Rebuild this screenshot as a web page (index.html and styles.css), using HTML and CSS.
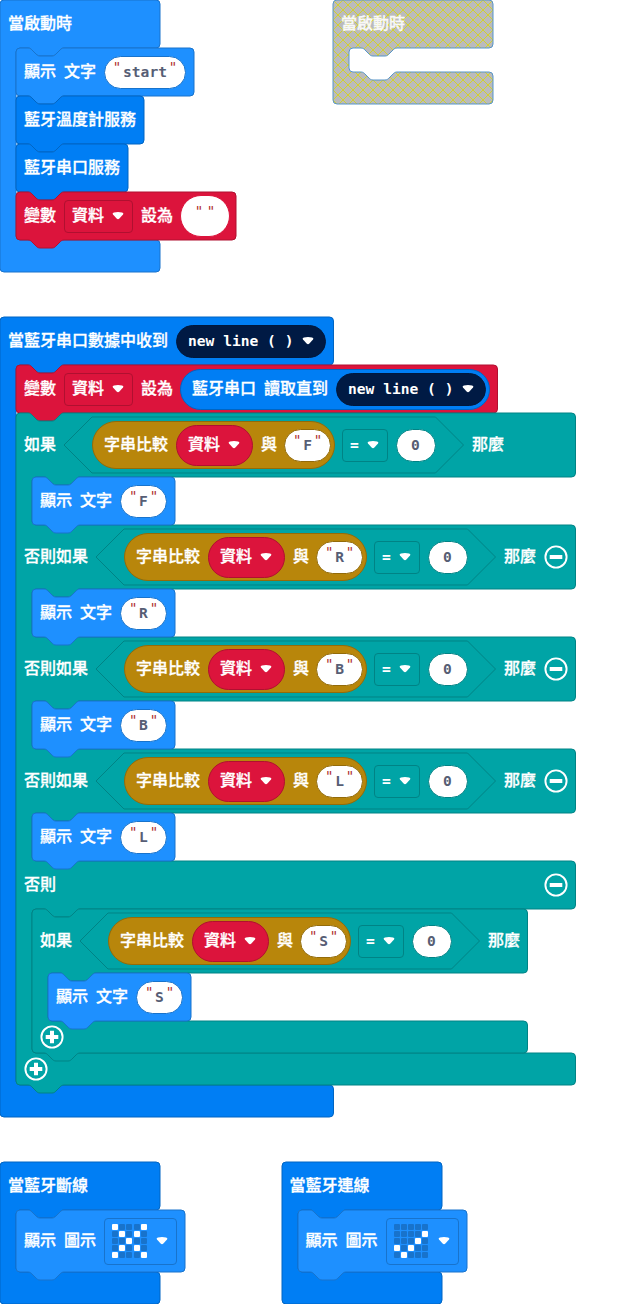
FILE: index.html
```html
<!DOCTYPE html>
<html lang="zh-Hant">
<head>
<meta charset="utf-8">
<title>micro:bit</title>
<link rel="stylesheet" href="styles.css">
</head>
<body>
<svg class="defs" width="0" height="0">
  <defs>
    <pattern id="hatch" patternUnits="userSpaceOnUse" width="10" height="10">
      <rect width="10" height="10" fill="#bbb"/>
      <path d="M0 0l10 10M10 0l-10 10" stroke="#d2d22d" stroke-width="1"/>
    </pattern>
    <symbol id="arrow" viewBox="0 0 12 8"><path d="M2 .5Q6-.3 10 .5Q12 1 11 2.500L7.400 6.500Q6 7.900 4.600 6.500L1 2.500Q0 1 2 .5Z" fill="#fff"/></symbol>
    <symbol id="minus" viewBox="0 0 24 24"><circle cx="12" cy="12" r="10.600" fill="none" stroke="#fff" stroke-width="1.900"/><path d="M5.700 12h12.600" stroke="#fff" stroke-width="4"/></symbol>
    <symbol id="plus" viewBox="0 0 24 24"><circle cx="12" cy="12" r="10.600" fill="none" stroke="#fff" stroke-width="1.900"/><path d="M5.700 12h12.600M12 5.700v12.600" stroke="#fff" stroke-width="4"/></symbol>
    <path id="hex" d="M28 0H371.500L399.500 28L371.500 56H28L0 28Z"/>
    <path id="show" d="M0 4a4 4 0 0 1 4-4H12c2 0 3 1 4 2l4 4c1 1 2 2 4 2h12c2 0 3-1 4-2l4-4c1-1 2-2 4-2H139a4 4 0 0 1 4 4V44a4 4 0 0 1-4 4H48c-2 0-3 1-4 2l-4 4c-1 1-2 2-4 2h-12c-2 0-3-1-4-2l-4-4c-1-1-2-2-4-2H4a4 4 0 0 1-4-4Z"/>
    <path id="event" d="M0 4a4 4 0 0 1 4-4H156a4 4 0 0 1 4 4V44a4 4 0 0 1-4 4H64c-2 0-3 1-4 2l-4 4c-1 1-2 2-4 2h-12c-2 0-3-1-4-2l-4-4c-1-1-2-2-4-2H20a4 4 0 0 0-4 4V106a4 4 0 0 0 4 4H156a4 4 0 0 1 4 4V138a4 4 0 0 1-4 4H4a4 4 0 0 1-4-4Z"/>
    <path id="icon-block" d="M0 4a4 4 0 0 1 4-4H12c2 0 3 1 4 2l4 4c1 1 2 2 4 2h12c2 0 3-1 4-2l4-4c1-1 2-2 4-2H165a4 4 0 0 1 4 4V58a4 4 0 0 1-4 4H48c-2 0-3 1-4 2l-4 4c-1 1-2 2-4 2h-12c-2 0-3-1-4-2l-4-4c-1-1-2-2-4-2H4a4 4 0 0 1-4-4Z"/>
  </defs>
</svg>
<main class="workspace">

  <section class="stack on-start">
    <svg class="shape basic"><path d="M0 4a4 4 0 0 1 4-4H156a4 4 0 0 1 4 4V44a4 4 0 0 1-4 4H64c-2 0-3 1-4 2l-4 4c-1 1-2 2-4 2h-12c-2 0-3-1-4-2l-4-4c-1-1-2-2-4-2H20a4 4 0 0 0-4 4V236a4 4 0 0 0 4 4H156a4 4 0 0 1 4 4V268a4 4 0 0 1-4 4H4a4 4 0 0 1-4-4Z"/></svg>
    <div class="row"><span class="label">當啟動時</span></div>
    <div class="body">
      <div class="block">
        <svg class="shape basic"><path d="M0 4a4 4 0 0 1 4-4H12c2 0 3 1 4 2l4 4c1 1 2 2 4 2h12c2 0 3-1 4-2l4-4c1-1 2-2 4-2H174a4 4 0 0 1 4 4V44a4 4 0 0 1-4 4H48c-2 0-3 1-4 2l-4 4c-1 1-2 2-4 2h-12c-2 0-3-1-4-2l-4-4c-1-1-2-2-4-2H4a4 4 0 0 1-4-4Z"/></svg>
        <div class="row"><span class="label">顯示 文字</span><span class="text word"><i>"</i><b>start</b><i>"</i></span></div>
      </div>
      <div class="block">
        <svg class="shape ble"><path d="M0 4a4 4 0 0 1 4-4H12c2 0 3 1 4 2l4 4c1 1 2 2 4 2h12c2 0 3-1 4-2l4-4c1-1 2-2 4-2H124a4 4 0 0 1 4 4V44a4 4 0 0 1-4 4H48c-2 0-3 1-4 2l-4 4c-1 1-2 2-4 2h-12c-2 0-3-1-4-2l-4-4c-1-1-2-2-4-2H4a4 4 0 0 1-4-4Z"/></svg>
        <div class="row"><span class="label">藍牙溫度計服務</span></div>
      </div>
      <div class="block">
        <svg class="shape ble"><path d="M0 4a4 4 0 0 1 4-4H12c2 0 3 1 4 2l4 4c1 1 2 2 4 2h12c2 0 3-1 4-2l4-4c1-1 2-2 4-2H108a4 4 0 0 1 4 4V44a4 4 0 0 1-4 4H48c-2 0-3 1-4 2l-4 4c-1 1-2 2-4 2h-12c-2 0-3-1-4-2l-4-4c-1-1-2-2-4-2H4a4 4 0 0 1-4-4Z"/></svg>
        <div class="row"><span class="label">藍牙串口服務</span></div>
      </div>
      <div class="block">
        <svg class="shape vars"><path d="M0 4a4 4 0 0 1 4-4H12c2 0 3 1 4 2l4 4c1 1 2 2 4 2h12c2 0 3-1 4-2l4-4c1-1 2-2 4-2H216a4 4 0 0 1 4 4V44a4 4 0 0 1-4 4H48c-2 0-3 1-4 2l-4 4c-1 1-2 2-4 2h-12c-2 0-3-1-4-2l-4-4c-1-1-2-2-4-2H4a4 4 0 0 1-4-4Z"/></svg>
        <div class="row"><span class="label">變數</span><span class="drop var"><span class="label">資料</span><svg class="arrow"><use href="#arrow"/></svg></span><span class="label">設為</span><span class="text empty"><i>"</i><i>"</i></span></div>
      </div>
    </div>
    <div class="foot"></div>
  </section>

  <section class="stack disabled">
    <svg class="shape off"><path d="M0 4a4 4 0 0 1 4-4H156a4 4 0 0 1 4 4V44a4 4 0 0 1-4 4H64c-2 0-3 1-4 2l-4 4c-1 1-2 2-4 2h-12c-2 0-3-1-4-2l-4-4c-1-1-2-2-4-2H20a4 4 0 0 0-4 4V68a4 4 0 0 0 4 4H28c2 0 3 1 4 2l4 4c1 1 2 2 4 2h12c2 0 3-1 4-2l4-4c1-1 2-2 4-2H156a4 4 0 0 1 4 4V100a4 4 0 0 1-4 4H4a4 4 0 0 1-4-4Z"/></svg>
    <div class="row"><span class="label">當啟動時</span></div>
    <div class="gap"></div>
    <div class="foot"></div>
  </section>

  <section class="stack on-data">
    <svg class="shape ble"><path d="M0 4a4 4 0 0 1 4-4H329.500a4 4 0 0 1 4 4V44a4 4 0 0 1-4 4H64c-2 0-3 1-4 2l-4 4c-1 1-2 2-4 2h-12c-2 0-3-1-4-2l-4-4c-1-1-2-2-4-2H20a4 4 0 0 0-4 4V764a4 4 0 0 0 4 4H329.500a4 4 0 0 1 4 4V796a4 4 0 0 1-4 4H4a4 4 0 0 1-4-4Z"/></svg>
    <div class="row"><span class="label">當藍牙串口數據中收到</span><span class="delim"><b>new line ( )</b><svg class="arrow"><use href="#arrow"/></svg></span></div>
    <div class="body">
      <div class="block">
        <svg class="shape vars"><path d="M0 4a4 4 0 0 1 4-4H12c2 0 3 1 4 2l4 4c1 1 2 2 4 2h12c2 0 3-1 4-2l4-4c1-1 2-2 4-2H477.500a4 4 0 0 1 4 4V44a4 4 0 0 1-4 4H48c-2 0-3 1-4 2l-4 4c-1 1-2 2-4 2h-12c-2 0-3-1-4-2l-4-4c-1-1-2-2-4-2H4a4 4 0 0 1-4-4Z"/></svg>
        <div class="row"><span class="label">變數</span><span class="drop var"><span class="label">資料</span><svg class="arrow"><use href="#arrow"/></svg></span><span class="label">設為</span><span class="read"><span class="label">藍牙串口 讀取直到</span><span class="delim"><b>new line ( )</b><svg class="arrow"><use href="#arrow"/></svg></span></span></div>
      </div>

      <div class="block">
        <svg class="shape logic"><path d="M0 4a4 4 0 0 1 4-4H12c2 0 3 1 4 2l4 4c1 1 2 2 4 2h12c2 0 3-1 4-2l4-4c1-1 2-2 4-2H555.500a4 4 0 0 1 4 4V60a4 4 0 0 1-4 4H64c-2 0-3 1-4 2l-4 4c-1 1-2 2-4 2h-12c-2 0-3-1-4-2l-4-4c-1-1-2-2-4-2H20a4 4 0 0 0-4 4V108a4 4 0 0 0 4 4H555.500a4 4 0 0 1 4 4V172a4 4 0 0 1-4 4H64c-2 0-3 1-4 2l-4 4c-1 1-2 2-4 2h-12c-2 0-3-1-4-2l-4-4c-1-1-2-2-4-2H20a4 4 0 0 0-4 4V220a4 4 0 0 0 4 4H555.500a4 4 0 0 1 4 4V284a4 4 0 0 1-4 4H64c-2 0-3 1-4 2l-4 4c-1 1-2 2-4 2h-12c-2 0-3-1-4-2l-4-4c-1-1-2-2-4-2H20a4 4 0 0 0-4 4V332a4 4 0 0 0 4 4H555.500a4 4 0 0 1 4 4V396a4 4 0 0 1-4 4H64c-2 0-3 1-4 2l-4 4c-1 1-2 2-4 2h-12c-2 0-3-1-4-2l-4-4c-1-1-2-2-4-2H20a4 4 0 0 0-4 4V444a4 4 0 0 0 4 4H555.500a4 4 0 0 1 4 4V492a4 4 0 0 1-4 4H64c-2 0-3 1-4 2l-4 4c-1 1-2 2-4 2h-12c-2 0-3-1-4-2l-4-4c-1-1-2-2-4-2H20a4 4 0 0 0-4 4V636a4 4 0 0 0 4 4H555.500a4 4 0 0 1 4 4V668a4 4 0 0 1-4 4H48c-2 0-3 1-4 2l-4 4c-1 1-2 2-4 2h-12c-2 0-3-1-4-2l-4-4c-1-1-2-2-4-2H4a4 4 0 0 1-4-4Z"/></svg>
        <div class="row tall"><span class="label">如果</span>
          <span class="cond"><svg class="shape logic"><use href="#hex"/></svg><span class="compare"><span class="label">字串比較</span><span class="pill-var"><span class="label">資料</span><svg class="arrow"><use href="#arrow"/></svg></span><span class="label">與</span><span class="text"><i>"</i><b>F</b><i>"</i></span></span><span class="drop op"><b>=</b><svg class="arrow"><use href="#arrow"/></svg></span><span class="num">0</span></span>
          <span class="label">那麼</span></div>
        <div class="body"><div class="block"><svg class="shape basic"><use href="#show"/></svg><div class="row"><span class="label">顯示 文字</span><span class="text"><i>"</i><b>F</b><i>"</i></span></div></div></div>

        <div class="row tall"><span class="label">否則如果</span>
          <span class="cond"><svg class="shape logic"><use href="#hex"/></svg><span class="compare"><span class="label">字串比較</span><span class="pill-var"><span class="label">資料</span><svg class="arrow"><use href="#arrow"/></svg></span><span class="label">與</span><span class="text"><i>"</i><b>R</b><i>"</i></span></span><span class="drop op"><b>=</b><svg class="arrow"><use href="#arrow"/></svg></span><span class="num">0</span></span>
          <span class="label">那麼</span><svg class="btn"><use href="#minus"/></svg></div>
        <div class="body"><div class="block"><svg class="shape basic"><use href="#show"/></svg><div class="row"><span class="label">顯示 文字</span><span class="text"><i>"</i><b>R</b><i>"</i></span></div></div></div>

        <div class="row tall"><span class="label">否則如果</span>
          <span class="cond"><svg class="shape logic"><use href="#hex"/></svg><span class="compare"><span class="label">字串比較</span><span class="pill-var"><span class="label">資料</span><svg class="arrow"><use href="#arrow"/></svg></span><span class="label">與</span><span class="text"><i>"</i><b>B</b><i>"</i></span></span><span class="drop op"><b>=</b><svg class="arrow"><use href="#arrow"/></svg></span><span class="num">0</span></span>
          <span class="label">那麼</span><svg class="btn"><use href="#minus"/></svg></div>
        <div class="body"><div class="block"><svg class="shape basic"><use href="#show"/></svg><div class="row"><span class="label">顯示 文字</span><span class="text"><i>"</i><b>B</b><i>"</i></span></div></div></div>

        <div class="row tall"><span class="label">否則如果</span>
          <span class="cond"><svg class="shape logic"><use href="#hex"/></svg><span class="compare"><span class="label">字串比較</span><span class="pill-var"><span class="label">資料</span><svg class="arrow"><use href="#arrow"/></svg></span><span class="label">與</span><span class="text"><i>"</i><b>L</b><i>"</i></span></span><span class="drop op"><b>=</b><svg class="arrow"><use href="#arrow"/></svg></span><span class="num">0</span></span>
          <span class="label">那麼</span><svg class="btn"><use href="#minus"/></svg></div>
        <div class="body"><div class="block"><svg class="shape basic"><use href="#show"/></svg><div class="row"><span class="label">顯示 文字</span><span class="text"><i>"</i><b>L</b><i>"</i></span></div></div></div>

        <div class="row else"><span class="label">否則</span><svg class="btn"><use href="#minus"/></svg></div>
        <div class="body">
          <div class="block">
            <svg class="shape logic"><path d="M0 4a4 4 0 0 1 4-4H12c2 0 3 1 4 2l4 4c1 1 2 2 4 2h12c2 0 3-1 4-2l4-4c1-1 2-2 4-2H491.500a4 4 0 0 1 4 4V60a4 4 0 0 1-4 4H64c-2 0-3 1-4 2l-4 4c-1 1-2 2-4 2h-12c-2 0-3-1-4-2l-4-4c-1-1-2-2-4-2H20a4 4 0 0 0-4 4V108a4 4 0 0 0 4 4H491.500a4 4 0 0 1 4 4V140a4 4 0 0 1-4 4H48c-2 0-3 1-4 2l-4 4c-1 1-2 2-4 2h-12c-2 0-3-1-4-2l-4-4c-1-1-2-2-4-2H4a4 4 0 0 1-4-4Z"/></svg>
            <div class="row tall"><span class="label">如果</span>
              <span class="cond"><svg class="shape logic"><use href="#hex"/></svg><span class="compare"><span class="label">字串比較</span><span class="pill-var"><span class="label">資料</span><svg class="arrow"><use href="#arrow"/></svg></span><span class="label">與</span><span class="text"><i>"</i><b>S</b><i>"</i></span></span><span class="drop op"><b>=</b><svg class="arrow"><use href="#arrow"/></svg></span><span class="num">0</span></span>
              <span class="label">那麼</span></div>
            <div class="body"><div class="block"><svg class="shape basic"><use href="#show"/></svg><div class="row"><span class="label">顯示 文字</span><span class="text"><i>"</i><b>S</b><i>"</i></span></div></div></div>
            <div class="foot"><svg class="btn"><use href="#plus"/></svg></div>
          </div>
        </div>
        <div class="foot"><svg class="btn"><use href="#plus"/></svg></div>
      </div>
    </div>
    <div class="foot"></div>
  </section>

  <section class="stack disconnected">
    <svg class="shape ble"><use href="#event"/></svg>
    <div class="row"><span class="label">當藍牙斷線</span></div>
    <div class="body"><div class="block">
      <svg class="shape basic"><use href="#icon-block"/></svg>
      <div class="row icon-row"><span class="label">顯示 圖示</span><span class="drop leds">
        <span class="grid"><s class="on"></s><s></s><s></s><s></s><s class="on"></s><s></s><s class="on"></s><s></s><s class="on"></s><s></s><s></s><s></s><s class="on"></s><s></s><s></s><s></s><s class="on"></s><s></s><s class="on"></s><s></s><s class="on"></s><s></s><s></s><s></s><s class="on"></s></span>
        <svg class="arrow"><use href="#arrow"/></svg></span></div>
    </div></div>
    <div class="foot"></div>
  </section>

  <section class="stack connected">
    <svg class="shape ble"><use href="#event"/></svg>
    <div class="row"><span class="label">當藍牙連線</span></div>
    <div class="body"><div class="block">
      <svg class="shape basic"><use href="#icon-block"/></svg>
      <div class="row icon-row"><span class="label">顯示 圖示</span><span class="drop leds">
        <span class="grid"><s></s><s></s><s></s><s></s><s></s><s></s><s></s><s></s><s></s><s class="on"></s><s></s><s></s><s></s><s class="on"></s><s></s><s class="on"></s><s></s><s class="on"></s><s></s><s></s><s></s><s class="on"></s><s></s><s></s><s></s></span>
        <svg class="arrow"><use href="#arrow"/></svg></span></div>
    </div></div>
    <div class="foot"></div>
  </section>
</main>
</body>
</html>
```
FILE: styles.css
```css
* { box-sizing: border-box; }
body { margin: 0; background: #fff; }
.defs { position: absolute; }

/* Free canvas: each top-level stack has its own position */
.workspace {
  position: relative;
  width: 631px;
  height: 1304px;
  overflow: hidden;
  color: #fff;
  font: 500 16px/24px "Noto Sans CJK TC", sans-serif;
}
.stack { position: absolute; }
.on-start { left: 0; top: 0; }
.disabled { left: 333px; top: 0; }
.on-data { left: 0; top: 317px; }
.disconnected { left: 0; top: 1162px; }
.connected { left: 281.5px; top: 1162px; }
.disabled .label { opacity: .9; }

/* Block outlines lie behind the row contents */
.shape {
  position: absolute;
  left: 0;
  top: 0;
  width: 1px;
  height: 1px;
  overflow: visible;
  stroke-width: 1;
}
.basic { fill: #1e90ff; stroke: #1873cc; }
.ble { fill: #007ef4; stroke: #0065c3; }
.vars { fill: #dc143c; stroke: #b01030; }
.logic { fill: #00a4a6; stroke: #008385; }
.off { fill: url(#hatch); stroke: #5795c8; }

.block { position: relative; }
.body { margin-left: 16px; }
.row {
  position: relative;
  display: flex;
  align-items: center;
  gap: 8px;
  height: 48px;
  padding-left: 8px;
}
.tall { height: 64px; }
.icon-row { height: 62px; }
.else { width: 560px; justify-content: space-between; padding-right: 8px; }
.gap { height: 24px; }
.foot { position: relative; display: flex; align-items: center; height: 32px; padding-left: 8px; }

.label { flex: none; white-space: nowrap; padding-bottom: 4px; word-spacing: 4.400px; -webkit-text-stroke: .3px currentColor; }
.arrow { flex: none; width: 12px; height: 8px; }
.btn { flex: none; width: 24px; height: 24px; margin-top: -1px; }
b, .num { font: bold 14.600px/20px "DejaVu Sans Mono", monospace; white-space: pre; }

.drop {
  flex: none;
  display: flex;
  align-items: center;
  justify-content: space-between;
  height: 33px;
  padding: 0 8px 0 7px;
  border: 1px solid #b01030;
  border-radius: 4px;
}
.var { width: 69px; }
.op { width: 46px; border-color: #008385; }
.leds { width: 73px; height: 47px; border-color: #1873cc; }

.delim {
  flex: none;
  display: flex;
  align-items: center;
  justify-content: space-between;
  width: 150px;
  height: 33px;
  padding: 0 11px;
  border: 1px solid #00183d;
  border-radius: 17px;
  background: #001a44;
}
.read {
  display: flex;
  align-items: center;
  gap: 8px;
  width: 310px;
  height: 41px;
  margin-left: -1px;
  padding-left: 11px;
  border: 1px solid #0065c3;
  border-radius: 21px;
  background: #007ef4;
}

.text {
  flex: none;
  display: flex;
  align-items: center;
  justify-content: center;
  width: 47px;
  height: 33px;
  border: 1px solid #1873cc;
  border-radius: 17px;
  background: #fff;
  color: #575e75;
}
.word { width: 82px; }
.empty { width: 50px; height: 42px; margin-left: -1px; border-color: #dc143c; border-radius: 21px; }
.text i {
  width: 12px;
  padding-bottom: 10px;
  color: #b03030;
  font: normal 14px/20px "DejaVu Sans Mono", monospace;
  text-align: center;
}

.cond {
  position: relative;
  flex: none;
  display: flex;
  align-items: center;
  gap: 7.500px;
  width: 400px;
  height: 56px;
  padding-left: 28px;
}
.compare {
  position: relative;
  flex: none;
  display: flex;
  align-items: center;
  gap: 8px;
  width: 243px;
  height: 48px;
  padding-left: 11px;
  border: 1px solid #936b09;
  border-radius: 25px;
  background: #b8860b;
}
.compare .text { border-color: #936b09; margin-left: -1px; }
.pill-var {
  flex: none;
  display: flex;
  align-items: center;
  justify-content: space-between;
  width: 77px;
  height: 41px;
  padding: 0 12px 0 11px;
  border: 1px solid #b01030;
  border-radius: 21px;
  background: #dc143c;
}
.cond > .op, .num { position: relative; }
.cond > .op { margin-left: -.5px; }
.num {
  width: 40px;
  height: 33px;
  border: 1px solid #008385;
  border-radius: 17px;
  background: #fff;
  color: #575e75;
  line-height: 30px;
  text-align: center;
}

.grid { display: grid; grid-template-columns: repeat(5, 6px); gap: 1.200px; }
.grid s { height: 6px; border-radius: 1px; background: #1873cc; }
.grid .on { background: #fff; }
```
